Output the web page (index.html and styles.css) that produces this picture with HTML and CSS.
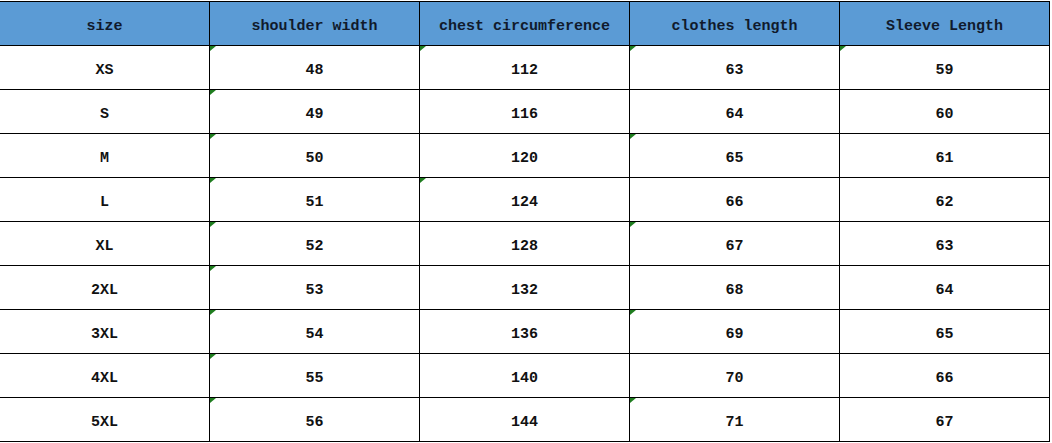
FILE: index.html
```html
<!DOCTYPE html>
<html>
<head>
<meta charset="utf-8">
<link rel="stylesheet" href="styles.css">
</head>
<body>
<table class="size-table">
  <thead>
    <tr>
      <th>size</th>
      <th>shoulder width</th>
      <th>chest circumference</th>
      <th>clothes length</th>
      <th>Sleeve Length</th>
    </tr>
  </thead>
  <tbody>
    <tr><td>XS</td><td class="mark">48</td><td class="mark">112</td><td class="mark">63</td><td class="mark">59</td></tr>
    <tr><td>S</td><td class="mark">49</td><td>116</td><td>64</td><td>60</td></tr>
    <tr><td>M</td><td class="mark">50</td><td>120</td><td class="mark">65</td><td>61</td></tr>
    <tr><td>L</td><td class="mark">51</td><td class="mark">124</td><td>66</td><td>62</td></tr>
    <tr><td>XL</td><td class="mark">52</td><td>128</td><td class="mark">67</td><td>63</td></tr>
    <tr><td>2XL</td><td class="mark">53</td><td>132</td><td>68</td><td>64</td></tr>
    <tr><td>3XL</td><td class="mark">54</td><td>136</td><td class="mark">69</td><td>65</td></tr>
    <tr><td>4XL</td><td class="mark">55</td><td>140</td><td>70</td><td>66</td></tr>
    <tr><td>5XL</td><td class="mark">56</td><td>144</td><td class="mark">71</td><td>67</td></tr>
  </tbody>
</table>
</body>
</html>
```

FILE: styles.css
```css
html, body {
  margin: 0;
  padding: 0;
  background: #ffffff;
}

body {
  padding-top: 1px;
}

.size-table {
  border-collapse: separate;
  border-spacing: 0;
  table-layout: fixed;
  width: 1050px;
  font-family: "Liberation Mono", "DejaVu Sans Mono", monospace;
  font-size: 15px;
  font-weight: bold;
  color: #111111;
}

.size-table th,
.size-table td {
  width: 209px;
  padding: 6px 0 0 0;
  box-sizing: border-box;
  text-align: center;
  vertical-align: middle;
  border-right: 1px solid #000000;
  border-bottom: 1px solid #000000;
  position: relative;
}

.size-table th {
  height: 45px;
  background: #5b9bd5;
  color: #101a2c;
  border-top: 1px solid #000000;
}

.size-table td {
  height: 44px;
}

.size-table td.mark::before {
  content: "";
  position: absolute;
  left: 0;
  top: 0;
  width: 0;
  height: 0;
  border-top: 5px solid #1f7d1f;
  border-right: 6px solid transparent;
}
```
